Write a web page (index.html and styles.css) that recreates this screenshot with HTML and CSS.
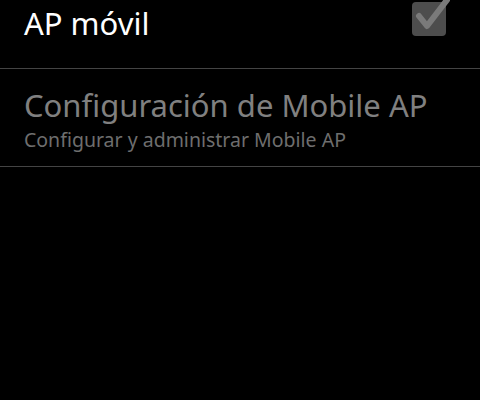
FILE: index.html
```html
<!DOCTYPE html>
<html lang="es">
<head>
    <meta charset="UTF-8">
    <title>Mobile AP</title>
    <link rel="stylesheet" href="styles.css">
</head>
<body>

<!-- Toggle row -->
<div class="row toggle-row">
    <span class="title on">AP móvil</span>
    <span class="checkbox">
        <svg width="40" height="40" viewBox="0 0 40 40">
            <rect x="2" y="2" width="34" height="34" rx="4" fill="#4d4d4d"/>
            <path d="M9 16 L17 26 L37 0" fill="none" stroke="#7a7a7a" stroke-width="6" stroke-linecap="round" stroke-linejoin="round"/>
        </svg>
    </span>
</div>

<!-- Settings row -->
<div class="row settings-row">
    <div class="title">Configuración de Mobile AP</div>
    <div class="summary">Configurar y administrar Mobile AP</div>
</div>

</body>
</html>
```

FILE: styles.css
```css
body {
    margin: 0;
    background-color: #000;
    font-family: "Noto Sans", "Open Sans", sans-serif;
    overflow: hidden;
}
.row {
    border-bottom: 1px solid #444;
    padding: 0 24px;
}
.toggle-row {
    height: 68px;
    display: flex;
    align-items: flex-start;
    justify-content: space-between;
    padding-right: 30px;
}
.toggle-row .title {
    margin-top: 3px;
}
.title {
    font-size: 31px;
    color: #808080;
    line-height: 40px;
}
.title.on {
    color: #fff;
}
.checkbox {
    display: flex;
}
.settings-row {
    height: 81px;
    padding-top: 16px;
}
.summary {
    font-size: 19.5px;
    color: #6e6e6e;
    line-height: 26px;
    margin-top: 2px;
}
```
